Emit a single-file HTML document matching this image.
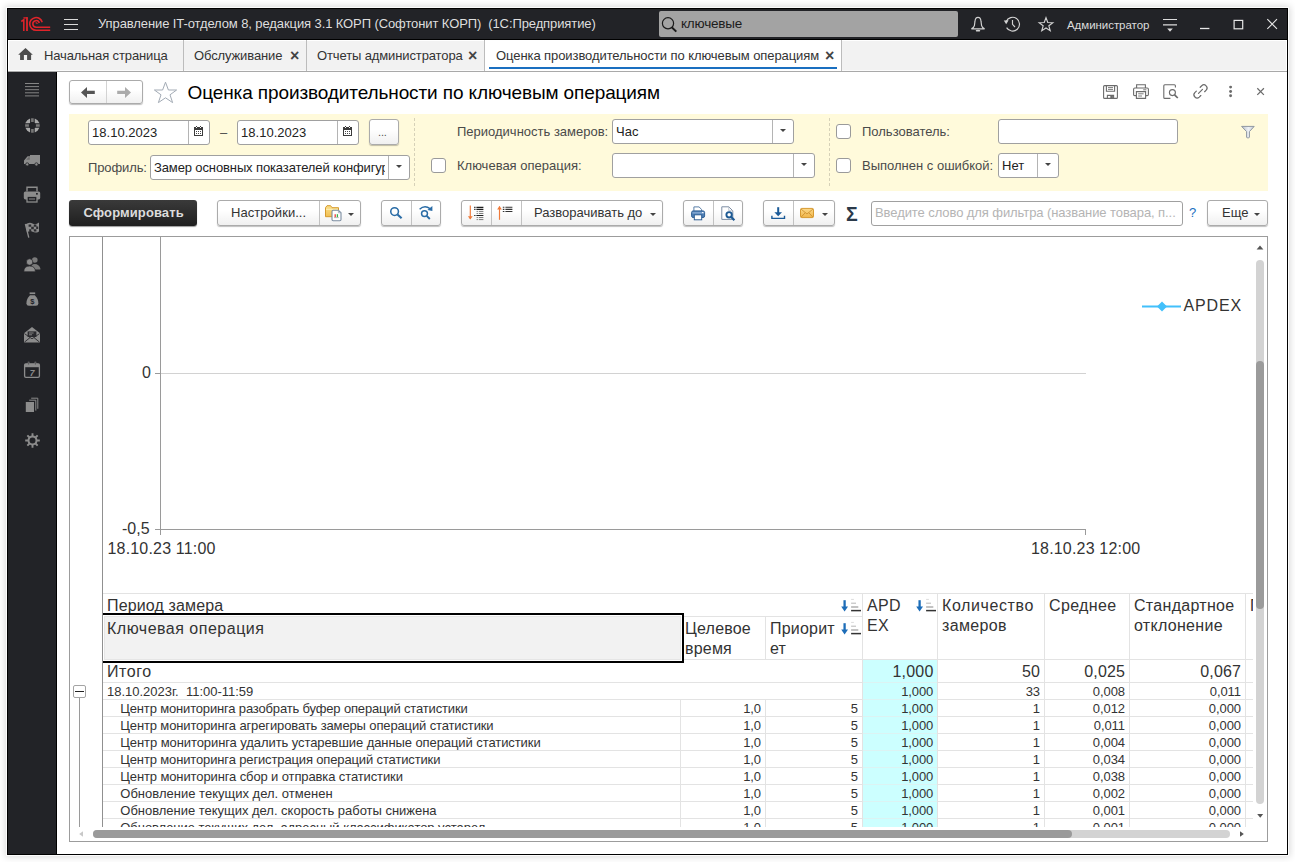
<!DOCTYPE html>
<html lang="ru"><head><meta charset="utf-8"><title>Оценка производительности по ключевым операциям</title>
<style>
*{box-sizing:border-box;margin:0;padding:0}
html,body{width:1295px;height:862px;overflow:hidden;background:#fff}
body{font-family:"Liberation Sans",sans-serif;font-size:13px;color:#333;position:relative}
.a{position:absolute}
.t{position:absolute;white-space:pre;line-height:16px;letter-spacing:-0.12px}
#win{left:7px;top:8px;width:1281px;height:847px;border:1px solid #000;background:#fff;box-shadow:0 0 0 1px #fbfbfb,0 0 7px 2px rgba(0,0,0,.15)}
#titlebar{left:8px;top:9px;width:1279px;height:30px;background:#222327}
#titleline{left:8px;top:39px;width:1279px;height:1px;background:#000}
#tabbar{left:8px;top:40px;width:1279px;height:32px;background:#f2f2f2;border-bottom:1px solid #a9a9a9;box-shadow:inset 1px 1px 0 #fff,inset -1px 0 0 #fff}
#side{left:8px;top:72px;width:49px;height:782px;background:#222327;border-right:1px solid #000}
.tabsep{top:40px;width:1px;height:31px;background:#bcbcbc}
.tx{font-weight:bold;font-size:13px;color:#444}
.btn{position:absolute;border:1px solid #ababab;border-radius:3px;background:linear-gradient(#ffffff 40%,#f0f0f0);box-shadow:0 1px 1px rgba(0,0,0,.25)}
.inp{position:absolute;border:1px solid #a0a0a0;border-radius:3px;background:#fff}
.cb{position:absolute;width:15px;height:15px;border:1px solid #9a9a9a;border-radius:3px;background:#fff}
.vsep{position:absolute;width:1px;background:#c6c6c6}
.lab{color:#4a4a4a;letter-spacing:0}
.arr{position:absolute;width:0;height:0;border-left:3px solid transparent;border-right:3px solid transparent;border-top:3px solid #444}
.cell{position:absolute;white-space:pre;overflow:hidden}
.hl{position:absolute;height:1px;background:#e3e3e3}
.vl{position:absolute;width:1px;background:#e3e3e3}
</style></head>
<body>
<div id="win" class="a"></div>
<div id="titlebar" class="a"></div>
<div id="titleline" class="a"></div>
<div id="tabbar" class="a"></div>
<div id="side" class="a"></div>
<div class="t" style="left:98px;top:16px;color:#dedede;letter-spacing:-0.1px">Управление IT-отделом 8, редакция 3.1 КОРП (Софтонит КОРП)  (1С:Предприятие)</div>
<div class="a" style="left:659px;top:11px;width:299px;height:26px;background:#a3a3a3;border-radius:2px"></div>
<div class="t" style="left:681px;top:16px;color:#1c1c1c;font-size:13.5px;letter-spacing:-0.2px">ключевые</div>
<div class="t" style="left:1067px;top:17px;color:#dcdcdc;font-size:11.5px;letter-spacing:-0.05px">Администратор</div>
<div class="a" style="left:8px;top:70px;width:1279px;height:1px;background:#fbfbfb"></div>
<div class="a" style="left:485px;top:40px;width:356px;height:31px;background:#fff"></div>
<div class="a tabsep" style="left:183px"></div>
<div class="a tabsep" style="left:306px"></div>
<div class="a tabsep" style="left:484px"></div>
<div class="a tabsep" style="left:841px"></div>
<div class="a" style="left:489px;top:67px;width:348px;height:2px;background:#1a6fc0"></div>
<div class="t" style="left:44px;top:48px">Начальная страница</div>
<div class="t" style="left:194px;top:48px">Обслуживание</div>
<div class="t" style="left:317px;top:48px">Отчеты администратора</div>
<div class="t" style="left:496px;top:48px;letter-spacing:-0.08px">Оценка производительности по ключевым операциям</div>
<div class="t tx" style="left:290px;top:48px;font-size:16px">×</div>
<div class="t tx" style="left:468px;top:48px;font-size:16px">×</div>
<div class="t tx" style="left:825px;top:48px;font-size:16px">×</div>
<div class="btn" style="left:69px;top:80px;width:74px;height:24px"></div>
<div class="a" style="left:106px;top:81px;width:1px;height:22px;background:#d3d3d3"></div>
<div class="t" style="left:187.5px;top:81px;font-size:19px;line-height:24px;color:#000;letter-spacing:-0.11px">Оценка производительности по ключевым операциям</div>
<div class="a" style="left:69px;top:114px;width:1199px;height:77px;background:#fffadb"></div>
<div class="inp" style="left:88px;top:120px;width:122px;height:25px"></div>
<div class="a" style="left:188px;top:121px;width:1px;height:23px;background:#b4b4b4"></div>
<div class="t" style="left:92px;top:125px;color:#222;letter-spacing:0.03px">18.10.2023</div>
<div class="inp" style="left:237px;top:120px;width:122px;height:25px"></div>
<div class="a" style="left:337px;top:121px;width:1px;height:23px;background:#b4b4b4"></div>
<div class="t" style="left:241px;top:125px;color:#222;letter-spacing:0.03px">18.10.2023</div>
<div class="t lab" style="left:220px;top:125px">–</div>
<div class="btn" style="left:369px;top:119px;width:30px;height:26px"></div>
<div class="t" style="left:378px;top:124px;color:#555;font-size:11px">...</div>
<div class="a" style="left:414px;top:118px;width:0;height:68px;border-left:1px dashed #d6d1b8"></div>
<div class="a" style="left:829px;top:118px;width:0;height:68px;border-left:1px dashed #d6d1b8"></div>
<div class="t lab" style="left:457px;top:124px">Периодичность замеров:</div>
<div class="inp" style="left:612px;top:119px;width:182px;height:25px"></div>
<div class="a" style="left:772px;top:120px;width:1px;height:23px;background:#b4b4b4"></div>
<div class="t" style="left:616px;top:124px;color:#222;letter-spacing:0.03px">Час</div>
<div class="arr" style="left:780px;top:129px"></div>
<div class="t lab" style="left:88px;top:160px;letter-spacing:-0.12px">Профиль:</div>
<div class="inp" style="left:150px;top:155px;width:260px;height:25px"></div>
<div class="a" style="left:388px;top:156px;width:1px;height:23px;background:#b4b4b4"></div>
<div class="arr" style="left:396px;top:165px"></div>
<div class="t" style="left:154px;top:160px;color:#222;width:231px;overflow:hidden">Замер основных показателей конфигурации</div>
<div class="cb" style="left:431px;top:158px"></div>
<div class="t lab" style="left:457px;top:158px">Ключевая операция:</div>
<div class="inp" style="left:612px;top:153px;width:203px;height:25px"></div>
<div class="a" style="left:793px;top:154px;width:1px;height:23px;background:#b4b4b4"></div>
<div class="arr" style="left:801px;top:163px"></div>
<div class="cb" style="left:836px;top:124px"></div>
<div class="t lab" style="left:862px;top:124px">Пользователь:</div>
<div class="inp" style="left:998px;top:119px;width:180px;height:25px"></div>
<div class="cb" style="left:836px;top:158px"></div>
<div class="t lab" style="left:862px;top:158px">Выполнен с ошибкой:</div>
<div class="inp" style="left:998px;top:153px;width:61px;height:25px"></div>
<div class="a" style="left:1037px;top:154px;width:1px;height:23px;background:#b4b4b4"></div>
<div class="t" style="left:1002px;top:158px;color:#222;letter-spacing:0.03px">Нет</div>
<div class="arr" style="left:1045px;top:163px"></div>
<div class="a" style="left:69px;top:200px;width:128px;height:26px;border-radius:3px;background:linear-gradient(#3a3a3a,#1f1f1f);box-shadow:0 1px 1px rgba(0,0,0,.4)"></div>
<div class="t" style="left:83.5px;top:205px;color:#dcdcdc;font-weight:bold;letter-spacing:0.1px;font-size:13px">Сформировать</div>
<div class="btn" style="left:217px;top:200px;width:144px;height:26px"></div>
<div class="a" style="left:319px;top:201px;width:1px;height:24px;background:#c2c2c2"></div>
<div class="arr" style="left:348px;top:213px"></div>
<div class="t" style="left:231px;top:205px;color:#333;font-size:13px;letter-spacing:0.05px">Настройки...</div>
<div class="btn" style="left:381px;top:200px;width:60px;height:26px"></div>
<div class="a" style="left:411px;top:201px;width:1px;height:24px;background:#c2c2c2"></div>
<div class="btn" style="left:461px;top:200px;width:202px;height:26px"></div>
<div class="a" style="left:491px;top:201px;width:1px;height:24px;background:#c2c2c2"></div>
<div class="a" style="left:521px;top:201px;width:1px;height:24px;background:#c2c2c2"></div>
<div class="arr" style="left:650px;top:213px"></div>
<div class="t" style="left:534px;top:205px;color:#333;font-size:13px;letter-spacing:0">Разворачивать до</div>
<div class="btn" style="left:683px;top:200px;width:60px;height:26px"></div>
<div class="a" style="left:713px;top:201px;width:1px;height:24px;background:#c2c2c2"></div>
<div class="btn" style="left:763px;top:200px;width:72px;height:26px"></div>
<div class="a" style="left:793px;top:201px;width:1px;height:24px;background:#c2c2c2"></div>
<div class="arr" style="left:822px;top:213px"></div>
<div class="t" style="left:846px;top:202px;color:#2b3a4a;font-size:19.5px;font-weight:bold;line-height:24px;letter-spacing:0">Σ</div>
<div class="inp" style="left:871px;top:201px;width:312px;height:25px"></div>
<div class="t" style="left:875px;top:205px;color:#b4b4b4;font-size:13px;letter-spacing:-0.08px">Введите слово для фильтра (название товара, п...</div>
<div class="t" style="left:1189px;top:205px;color:#1a6fc0;font-size:13px">?</div>
<div class="btn" style="left:1207px;top:200px;width:61px;height:26px"></div>
<div class="arr" style="left:1254px;top:213px"></div>
<div class="t" style="left:1222px;top:205px;color:#333;font-size:13px;letter-spacing:0">Еще</div>
<div class="a" style="left:69px;top:236px;width:1199px;height:606px;border:1px solid #9c9c9c;background:#fff"></div>
<div class="a" style="left:102px;top:237px;width:1px;height:590px;background:#909090"></div>
<div class="a" style="left:160px;top:237px;width:1px;height:298px;background:#9a9a9a"></div>
<div class="a" style="left:155px;top:373px;width:5px;height:1px;background:#9a9a9a"></div>
<div class="a" style="left:161px;top:373px;width:925px;height:1px;background:#d2d2d2"></div>
<div class="a" style="left:155px;top:529px;width:931px;height:1px;background:#9a9a9a"></div>
<div class="a" style="left:1085px;top:529px;width:1px;height:6px;background:#9a9a9a"></div>
<div class="t" style="left:142px;top:364px;font-size:16px;line-height:18px;color:#333;letter-spacing:0.18px">0</div>
<div class="t" style="left:122px;top:520px;font-size:16px;line-height:18px;color:#333;letter-spacing:0.18px;letter-spacing:0">-0,5</div>
<div class="t" style="left:107.5px;top:540px;font-size:16px;line-height:18px;color:#333;letter-spacing:0.18px">18.10.23 11:00</div>
<div class="t" style="left:1031px;top:540px;font-size:16px;line-height:18px;color:#333;letter-spacing:0.18px">18.10.23 12:00</div>
<div class="t" style="left:1183.5px;top:297px;font-size:16px;line-height:18px;color:#333;letter-spacing:0.18px;letter-spacing:0.85px">APDEX</div>
<svg class="a" style="left:1140px;top:298.5px" width="44" height="14"><path d="M2 7.5H41" stroke="#42c0fb" stroke-width="2"/><path d="M17 7.5l5-5 5 5-5 5z" fill="#42c0fb"/></svg>
<div class="a" style="left:863px;top:660px;width:74px;height:167px;background:#ccffff"></div>
<div class="hl" style="left:103px;top:593px;width:1150px"></div>
<div class="hl" style="left:103px;top:616px;width:759px"></div>
<div class="hl" style="left:103px;top:659px;width:1150px"></div>
<div class="hl" style="left:103px;top:682px;width:1150px"></div>
<div class="hl" style="left:103px;top:699px;width:1150px"></div>
<div class="hl" style="left:103px;top:716px;width:1150px"></div>
<div class="hl" style="left:103px;top:733px;width:1150px"></div>
<div class="hl" style="left:103px;top:750px;width:1150px"></div>
<div class="hl" style="left:103px;top:767px;width:1150px"></div>
<div class="hl" style="left:103px;top:784px;width:1150px"></div>
<div class="hl" style="left:103px;top:801px;width:1150px"></div>
<div class="hl" style="left:103px;top:818px;width:1150px"></div>
<div class="hl" style="left:863px;top:682px;width:74px;background:#dcf3f3"></div>
<div class="hl" style="left:863px;top:699px;width:74px;background:#dcf3f3"></div>
<div class="hl" style="left:863px;top:716px;width:74px;background:#dcf3f3"></div>
<div class="hl" style="left:863px;top:733px;width:74px;background:#dcf3f3"></div>
<div class="hl" style="left:863px;top:750px;width:74px;background:#dcf3f3"></div>
<div class="hl" style="left:863px;top:767px;width:74px;background:#dcf3f3"></div>
<div class="hl" style="left:863px;top:784px;width:74px;background:#dcf3f3"></div>
<div class="hl" style="left:863px;top:801px;width:74px;background:#dcf3f3"></div>
<div class="hl" style="left:863px;top:818px;width:74px;background:#dcf3f3"></div>
<div class="vl" style="left:862px;top:593px;height:234px"></div>
<div class="vl" style="left:937px;top:593px;height:234px"></div>
<div class="vl" style="left:1044px;top:593px;height:234px"></div>
<div class="vl" style="left:1129px;top:593px;height:234px"></div>
<div class="vl" style="left:1245px;top:593px;height:234px"></div>
<div class="vl" style="left:765px;top:616px;height:43px"></div>
<div class="vl" style="left:680px;top:699px;height:128px"></div>
<div class="vl" style="left:765px;top:699px;height:128px"></div>
<div class="t" style="left:107px;top:596px;font-size:16px;line-height:20px;color:#333;letter-spacing:0.14px">Период замера</div>
<div class="a" style="left:103px;top:613px;width:581px;height:50px;background:#f2f2f2;border:2px solid #000;border-left:0;box-shadow:inset 0 0 0 1px #fff,inset 0 0 0 2px #e6e6e6"></div>
<div class="t" style="left:107px;top:619px;font-size:16px;line-height:20px;color:#333;letter-spacing:0.5px">Ключевая операция</div>
<div class="t" style="left:685px;top:619px;font-size:16px;line-height:20px;color:#333;letter-spacing:0.2px">Целевое
время</div>
<div class="t" style="left:770px;top:619px;font-size:16px;line-height:20px;color:#333;letter-spacing:0.2px">Приорит
ет</div>
<div class="t" style="left:867px;top:596px;font-size:16px;line-height:20px;color:#333;letter-spacing:0.3px">APD
EX</div>
<div class="t" style="left:942px;top:596px;font-size:16px;line-height:20px;color:#333;letter-spacing:0.6px">Количество</div>
<div class="t" style="left:942px;top:616px;font-size:16px;line-height:20px;color:#333;letter-spacing:0.33px">замеров</div>
<div class="t" style="left:1049px;top:596px;font-size:16px;line-height:20px;color:#333;letter-spacing:0.36px">Среднее</div>
<div class="t" style="left:1134px;top:596px;font-size:16px;line-height:20px;color:#333;letter-spacing:0.3px">Стандартное
отклонение</div>
<div class="t" style="left:1250px;top:596px;font-size:16px;line-height:20px;color:#333;letter-spacing:0px;width:3px;overflow:hidden">П</div>
<div class="t" style="left:107px;top:662px;font-size:16px;line-height:20px;color:#333;letter-spacing:0.56px">Итого</div>
<div class="t" style="right:361.7px;top:662px;font-size:16px;line-height:20px;color:#333;letter-spacing:0.2px;margin-right:-0.2px;text-align:right">1,000</div>
<div class="t" style="right:255px;top:662px;font-size:16px;line-height:20px;color:#333;letter-spacing:0.2px;margin-right:-0.2px;text-align:right">50</div>
<div class="t" style="right:170px;top:662px;font-size:16px;line-height:20px;color:#333;letter-spacing:0.2px;margin-right:-0.2px;text-align:right">0,025</div>
<div class="t" style="right:54px;top:662px;font-size:16px;line-height:20px;color:#333;letter-spacing:0.2px;margin-right:-0.2px;text-align:right">0,067</div>
<div class="t" style="left:107px;top:684px;font-size:13px;line-height:16px;color:#333;letter-spacing:-0.01px">18.10.2023г.  11:00-11:59</div>
<div class="t" style="right:361.7px;top:684px;font-size:13px;line-height:16px;color:#333;letter-spacing:-0.01px;letter-spacing:-0.1px;margin-right:0.1px;text-align:right">1,000</div>
<div class="t" style="right:255px;top:684px;font-size:13px;line-height:16px;color:#333;letter-spacing:-0.01px;letter-spacing:-0.1px;margin-right:0.1px;text-align:right">33</div>
<div class="t" style="right:170px;top:684px;font-size:13px;line-height:16px;color:#333;letter-spacing:-0.01px;letter-spacing:-0.1px;margin-right:0.1px;text-align:right">0,008</div>
<div class="t" style="right:54px;top:684px;font-size:13px;line-height:16px;color:#333;letter-spacing:-0.01px;letter-spacing:-0.1px;margin-right:0.1px;text-align:right">0,011</div>
<div class="a" style="left:103px;top:700px;width:1150px;height:127px;overflow:hidden">
<div class="t" style="left:17.3px;top:1px;font-size:13px;line-height:16px;color:#333;letter-spacing:-0.12px;letter-spacing:-0.16px">Центр мониторинга разобрать буфер операций статистики</div><div class="t" style="right:492px;top:1px;font-size:13px;line-height:16px;color:#333;letter-spacing:-0.1px;margin-right:0.1px">1,0</div><div class="t" style="right:395px;top:1px;font-size:13px;line-height:16px;color:#333;letter-spacing:-0.1px;margin-right:0.1px">5</div><div class="t" style="right:319.7px;top:1px;font-size:13px;line-height:16px;color:#333;letter-spacing:-0.1px;margin-right:0.1px">1,000</div><div class="t" style="right:213px;top:1px;font-size:13px;line-height:16px;color:#333;letter-spacing:-0.1px;margin-right:0.1px">1</div><div class="t" style="right:128px;top:1px;font-size:13px;line-height:16px;color:#333;letter-spacing:-0.1px;margin-right:0.1px">0,012</div><div class="t" style="right:12px;top:1px;font-size:13px;line-height:16px;color:#333;letter-spacing:-0.1px;margin-right:0.1px">0,000</div>
<div class="t" style="left:17.3px;top:18px;font-size:13px;line-height:16px;color:#333;letter-spacing:-0.12px;letter-spacing:-0.13px">Центр мониторинга агрегировать замеры операций статистики</div><div class="t" style="right:492px;top:18px;font-size:13px;line-height:16px;color:#333;letter-spacing:-0.1px;margin-right:0.1px">1,0</div><div class="t" style="right:395px;top:18px;font-size:13px;line-height:16px;color:#333;letter-spacing:-0.1px;margin-right:0.1px">5</div><div class="t" style="right:319.7px;top:18px;font-size:13px;line-height:16px;color:#333;letter-spacing:-0.1px;margin-right:0.1px">1,000</div><div class="t" style="right:213px;top:18px;font-size:13px;line-height:16px;color:#333;letter-spacing:-0.1px;margin-right:0.1px">1</div><div class="t" style="right:128px;top:18px;font-size:13px;line-height:16px;color:#333;letter-spacing:-0.1px;margin-right:0.1px">0,011</div><div class="t" style="right:12px;top:18px;font-size:13px;line-height:16px;color:#333;letter-spacing:-0.1px;margin-right:0.1px">0,000</div>
<div class="t" style="left:17.3px;top:35px;font-size:13px;line-height:16px;color:#333;letter-spacing:-0.12px;letter-spacing:-0.08px">Центр мониторинга удалить устаревшие данные операций статистики</div><div class="t" style="right:492px;top:35px;font-size:13px;line-height:16px;color:#333;letter-spacing:-0.1px;margin-right:0.1px">1,0</div><div class="t" style="right:395px;top:35px;font-size:13px;line-height:16px;color:#333;letter-spacing:-0.1px;margin-right:0.1px">5</div><div class="t" style="right:319.7px;top:35px;font-size:13px;line-height:16px;color:#333;letter-spacing:-0.1px;margin-right:0.1px">1,000</div><div class="t" style="right:213px;top:35px;font-size:13px;line-height:16px;color:#333;letter-spacing:-0.1px;margin-right:0.1px">1</div><div class="t" style="right:128px;top:35px;font-size:13px;line-height:16px;color:#333;letter-spacing:-0.1px;margin-right:0.1px">0,004</div><div class="t" style="right:12px;top:35px;font-size:13px;line-height:16px;color:#333;letter-spacing:-0.1px;margin-right:0.1px">0,000</div>
<div class="t" style="left:17.3px;top:52px;font-size:13px;line-height:16px;color:#333;letter-spacing:-0.12px;letter-spacing:-0.14px">Центр мониторинга регистрация операций статистики</div><div class="t" style="right:492px;top:52px;font-size:13px;line-height:16px;color:#333;letter-spacing:-0.1px;margin-right:0.1px">1,0</div><div class="t" style="right:395px;top:52px;font-size:13px;line-height:16px;color:#333;letter-spacing:-0.1px;margin-right:0.1px">5</div><div class="t" style="right:319.7px;top:52px;font-size:13px;line-height:16px;color:#333;letter-spacing:-0.1px;margin-right:0.1px">1,000</div><div class="t" style="right:213px;top:52px;font-size:13px;line-height:16px;color:#333;letter-spacing:-0.1px;margin-right:0.1px">1</div><div class="t" style="right:128px;top:52px;font-size:13px;line-height:16px;color:#333;letter-spacing:-0.1px;margin-right:0.1px">0,034</div><div class="t" style="right:12px;top:52px;font-size:13px;line-height:16px;color:#333;letter-spacing:-0.1px;margin-right:0.1px">0,000</div>
<div class="t" style="left:17.3px;top:69px;font-size:13px;line-height:16px;color:#333;letter-spacing:-0.12px;letter-spacing:-0.115px">Центр мониторинга сбор и отправка статистики</div><div class="t" style="right:492px;top:69px;font-size:13px;line-height:16px;color:#333;letter-spacing:-0.1px;margin-right:0.1px">1,0</div><div class="t" style="right:395px;top:69px;font-size:13px;line-height:16px;color:#333;letter-spacing:-0.1px;margin-right:0.1px">5</div><div class="t" style="right:319.7px;top:69px;font-size:13px;line-height:16px;color:#333;letter-spacing:-0.1px;margin-right:0.1px">1,000</div><div class="t" style="right:213px;top:69px;font-size:13px;line-height:16px;color:#333;letter-spacing:-0.1px;margin-right:0.1px">1</div><div class="t" style="right:128px;top:69px;font-size:13px;line-height:16px;color:#333;letter-spacing:-0.1px;margin-right:0.1px">0,038</div><div class="t" style="right:12px;top:69px;font-size:13px;line-height:16px;color:#333;letter-spacing:-0.1px;margin-right:0.1px">0,000</div>
<div class="t" style="left:17.3px;top:86px;font-size:13px;line-height:16px;color:#333;letter-spacing:-0.12px;letter-spacing:0.01px">Обновление текущих дел. отменен</div><div class="t" style="right:492px;top:86px;font-size:13px;line-height:16px;color:#333;letter-spacing:-0.1px;margin-right:0.1px">1,0</div><div class="t" style="right:395px;top:86px;font-size:13px;line-height:16px;color:#333;letter-spacing:-0.1px;margin-right:0.1px">5</div><div class="t" style="right:319.7px;top:86px;font-size:13px;line-height:16px;color:#333;letter-spacing:-0.1px;margin-right:0.1px">1,000</div><div class="t" style="right:213px;top:86px;font-size:13px;line-height:16px;color:#333;letter-spacing:-0.1px;margin-right:0.1px">1</div><div class="t" style="right:128px;top:86px;font-size:13px;line-height:16px;color:#333;letter-spacing:-0.1px;margin-right:0.1px">0,002</div><div class="t" style="right:12px;top:86px;font-size:13px;line-height:16px;color:#333;letter-spacing:-0.1px;margin-right:0.1px">0,000</div>
<div class="t" style="left:17.3px;top:103px;font-size:13px;line-height:16px;color:#333;letter-spacing:-0.12px;letter-spacing:-0.02px">Обновление текущих дел. скорость работы снижена</div><div class="t" style="right:492px;top:103px;font-size:13px;line-height:16px;color:#333;letter-spacing:-0.1px;margin-right:0.1px">1,0</div><div class="t" style="right:395px;top:103px;font-size:13px;line-height:16px;color:#333;letter-spacing:-0.1px;margin-right:0.1px">5</div><div class="t" style="right:319.7px;top:103px;font-size:13px;line-height:16px;color:#333;letter-spacing:-0.1px;margin-right:0.1px">1,000</div><div class="t" style="right:213px;top:103px;font-size:13px;line-height:16px;color:#333;letter-spacing:-0.1px;margin-right:0.1px">1</div><div class="t" style="right:128px;top:103px;font-size:13px;line-height:16px;color:#333;letter-spacing:-0.1px;margin-right:0.1px">0,001</div><div class="t" style="right:12px;top:103px;font-size:13px;line-height:16px;color:#333;letter-spacing:-0.1px;margin-right:0.1px">0,000</div>
<div class="t" style="left:17.3px;top:120px;font-size:13px;line-height:16px;color:#333;letter-spacing:-0.12px;letter-spacing:-0.05px">Обновление текущих дел. адресный классификатор устарел</div><div class="t" style="right:492px;top:120px;font-size:13px;line-height:16px;color:#333;letter-spacing:-0.1px;margin-right:0.1px">1,0</div><div class="t" style="right:395px;top:120px;font-size:13px;line-height:16px;color:#333;letter-spacing:-0.1px;margin-right:0.1px">5</div><div class="t" style="right:319.7px;top:120px;font-size:13px;line-height:16px;color:#333;letter-spacing:-0.1px;margin-right:0.1px">1,000</div><div class="t" style="right:213px;top:120px;font-size:13px;line-height:16px;color:#333;letter-spacing:-0.1px;margin-right:0.1px">1</div><div class="t" style="right:128px;top:120px;font-size:13px;line-height:16px;color:#333;letter-spacing:-0.1px;margin-right:0.1px">0,001</div><div class="t" style="right:12px;top:120px;font-size:13px;line-height:16px;color:#333;letter-spacing:-0.1px;margin-right:0.1px">0,000</div>
</div>
<div class="a" style="left:73px;top:685px;width:13px;height:13px;border:1px solid #a4a4a4;border-radius:2px;background:#fff"></div>
<div class="a" style="left:75px;top:691px;width:9px;height:1px;background:#222"></div>
<div class="a" style="left:79px;top:698px;width:1px;height:129px;background:#9a9a9a"></div>
<div class="a" style="left:93px;top:830px;width:1137px;height:8px;border-radius:4px;background:#d3d3d3"></div>
<div class="a" style="left:93px;top:830px;width:979px;height:8px;border-radius:4px;background:#9a9a9a"></div>
<div class="a" style="left:1256px;top:260px;width:8px;height:544px;border-radius:4px;background:#d3d3d3"></div>
<div class="a" style="left:1256px;top:361px;width:8px;height:248px;border-radius:4px;background:#9b9b9b"></div>
<svg class="a" style="left:1255px;top:243px" width="10" height="8"><path d="M1.6 6.4L5 2.4L8.4 6.4z" fill="#555"/></svg>
<svg class="a" style="left:1255px;top:812px" width="10" height="8"><path d="M2.2 2L5.2 5.8L8.2 2z" fill="#555"/></svg>
<svg class="a" style="left:77px;top:829px" width="8" height="10"><path d="M6 2.2L2.2 5L6 7.8z" fill="#c8c8c8"/></svg>
<svg class="a" style="left:1238px;top:829px" width="8" height="10"><path d="M2 2.2L5.8 5L2 7.8z" fill="#555"/></svg>
<svg class="a" style="left:20px;top:16px" width="32" height="16" viewBox="0 0 32 16" ><g fill="none" stroke="#e0242a" stroke-width="1.55"><path d="M1.3 5.5L3.8 3.7V14.9"/><path d="M7 1.2V14.9" stroke-width="1.8"/><path d="M3.4 1.9H7.6" stroke-width="1.3"/><path d="M22.2 6.2A6.35 6.35 0 1 0 16.1 14.25H30.2"/><path d="M19.3 7A3.3 3.3 0 1 0 16.1 11.2H30.2"/><path d="M17.2 7.9A1.1 1.1 0 0 0 15.6 6.9" stroke-width="1.1"/></g></svg>
<svg class="a" style="left:63px;top:17px" width="16" height="14" viewBox="0 0 16 14" ><path d="M1 2.5H15M1 7.5H15M1 12.5H15" stroke="#dadada" stroke-width="1.1"/></svg>
<svg class="a" style="left:660px;top:15px" width="20" height="18" viewBox="0 0 20 18" ><circle cx="8" cy="8.3" r="5.6" fill="none" stroke="#1a1a1a" stroke-width="1.2"/><path d="M12 12.5L16.3 16.6" stroke="#1a1a1a" stroke-width="2"/></svg>
<svg class="a" style="left:969px;top:15px" width="18" height="18" viewBox="0 0 18 18" ><g fill="none" stroke="#d2d2d2" stroke-width="1.15"><path d="M9 2.4C7.2 2.4 6.2 4 6 6.2L5.4 10.6Q5 12.6 2.4 13.8H15.6Q13 12.6 12.6 10.6L12 6.2C11.8 4 10.8 2.4 9 2.4Z"/></g><ellipse cx="9" cy="15.7" rx="2.3" ry="0.9" fill="#d2d2d2"/></svg>
<svg class="a" style="left:1003px;top:15px" width="18" height="18" viewBox="0 0 18 18" ><g fill="none" stroke="#d2d2d2" stroke-width="1.15"><path d="M3.2 6.6A6.9 6.9 0 1 1 3.6 12.6"/><path d="M9.5 5V9.3L12 12"/></g><path d="M0.8 5.4L5.6 5.2L3.2 9.2Z" fill="#d2d2d2"/></svg>
<svg class="a" style="left:1037px;top:15px" width="18" height="18" viewBox="0 0 18 18" ><path d="M9.00 2.70L10.76 7.47L15.85 7.68L11.85 10.83L13.23 15.72L9.00 12.90L4.77 15.72L6.15 10.83L2.15 7.68L7.24 7.47Z" fill="none" stroke="#d2d2d2" stroke-width="1.15" stroke-linejoin="miter"/></svg>
<svg class="a" style="left:1162px;top:17px" width="16" height="16" viewBox="0 0 16 16" ><path d="M1 2.5H15M1 7.9H15" stroke="#dcdcdc" stroke-width="1.2"/><path d="M5.2 11.6H10.8L8 14.8Z" fill="#dcdcdc"/></svg>
<svg class="a" style="left:1199px;top:26px" width="12" height="4" viewBox="0 0 12 4" ><path d="M1 2.5H10.4" stroke="#e6e6e6" stroke-width="1.3"/></svg>
<svg class="a" style="left:1232px;top:18px" width="13" height="13" viewBox="0 0 13 13" ><rect x="2.1" y="2.4" width="8.6" height="8.4" fill="none" stroke="#e6e6e6" stroke-width="1.2"/></svg>
<svg class="a" style="left:1265px;top:17px" width="14" height="14" viewBox="0 0 14 14" ><path d="M2.3 2.2L12 11.9M12 2.2L2.3 11.9" stroke="#e6e6e6" stroke-width="1.1"/></svg>
<svg class="a" style="left:17px;top:46px" width="16" height="16" viewBox="0 0 16 16" ><path d="M8.5 2L1.2 8.8H3.1V13.9H6.9V9H10.1V13.9H14.1V8.8H15.8Z" fill="#4d4d4d"/></svg>
<svg class="a" style="left:78px;top:83.5px" width="20" height="16" viewBox="0 0 20 16" ><path d="M3 8.4L9 2.9V6.8H16.8V10H9V13.9Z" fill="#555"/></svg>
<svg class="a" style="left:114px;top:83.5px" width="20" height="16" viewBox="0 0 20 16" ><path d="M17 8.4L11 2.9V6.8H3.2V10H11V13.9Z" fill="#ababab"/></svg>
<svg class="a" style="left:152px;top:80px" width="27" height="25" viewBox="0 0 27 25" ><path d="M13.5 2.2L16.4 10H24.6L18 14.8L20.6 22.6L13.5 17.8L6.4 22.6L9 14.8L2.4 10H10.6Z" fill="#fff" stroke="#a3abb5" stroke-width="1"/></svg>
<svg class="a" style="left:1102px;top:84px" width="17" height="16" viewBox="0 0 17 16" ><g fill="none" stroke="#6b6b6b" stroke-width="1.1"><path d="M1.6 2.6Q1.6 1.6 2.6 1.6H14.4Q15.4 1.6 15.4 2.6V13.4Q15.4 14.4 14.4 14.4H2.6Q1.6 14.4 1.6 13.4Z"/><path d="M4.4 1.6V7.2H12.6V1.6"/><path d="M6 3.6H11M6 5.4H11" stroke-width=".9"/><path d="M5.4 14.4V11.4H11.6V14.4"/></g><rect x="8.3" y="11.6" width="2.6" height="2.6" fill="#6b6b6b"/></svg>
<svg class="a" style="left:1132px;top:83px" width="19" height="17" viewBox="0 0 19 17" ><g fill="none" stroke="#6b6b6b" stroke-width="1.1"><path d="M4.6 5V1.8H13.4V5"/><path d="M4.2 12.6H2.8Q1.6 12.6 1.6 11.4V6.2Q1.6 5 2.8 5H15.2Q16.4 5 16.4 6.2V11.4Q16.4 12.6 15.2 12.6H13.8"/><path d="M4.4 8.6H13.6V15.4H4.4Z"/><path d="M6.2 10.8H11.6M6.2 13H10" stroke-width=".9"/><path d="M11.2 6.8H14.4" stroke-width=".9"/></g></svg>
<svg class="a" style="left:1162px;top:83px" width="18" height="17" viewBox="0 0 18 17" ><g fill="none" stroke="#6b6b6b" stroke-width="1.1"><path d="M13.4 4.4V2.8Q13.4 1.8 12.4 1.8H2.8Q1.8 1.8 1.8 2.8V14.4Q1.8 15.4 2.8 15.4H8.4"/><circle cx="10.4" cy="9.6" r="3"/><path d="M12.6 11.8L15.8 15" stroke-width="1.7"/></g></svg>
<svg class="a" style="left:1191px;top:82px" width="19" height="19" viewBox="0 0 19 19" ><g fill="none" stroke="#6b6b6b" stroke-width="1.2" stroke-linecap="round"><path d="M9.18 5.26L10.74 3.71A3.15 3.15 0 0 1 15.19 8.16L13.64 9.72"/><path d="M9.82 13.54L8.26 15.09A3.15 3.15 0 0 1 3.81 10.64L5.36 9.08"/><path d="M7.52 11.38L11.48 7.42"/></g></svg>
<svg class="a" style="left:1227px;top:84px" width="7" height="15" viewBox="0 0 7 15" ><circle cx="3.6" cy="3.1" r="1.45" fill="#6b6b6b"/><circle cx="3.6" cy="7.5" r="1.45" fill="#6b6b6b"/><circle cx="3.6" cy="11.8" r="1.45" fill="#6b6b6b"/></svg>
<svg class="a" style="left:1255px;top:86px" width="11" height="11" viewBox="0 0 11 11" ><path d="M2.3 2.3L8.9 8.9M8.9 2.3L2.3 8.9" stroke="#6b6b6b" stroke-width="1.25"/></svg>
<svg class="a" style="left:194px;top:126px" width="9" height="10" viewBox="0 0 9 10" ><g shape-rendering="crispEdges"><rect x="1" y="4" width="7" height="5" fill="#fff"/><rect x="0" y="1" width="9" height="3" fill="#3c3c3c"/><rect x="2" y="0" width="1" height="1" fill="#3c3c3c"/><rect x="6" y="0" width="1" height="1" fill="#3c3c3c"/><rect x="2" y="1" width="1" height="1" fill="#fff"/><rect x="6" y="1" width="1" height="1" fill="#fff"/><rect x="0" y="4" width="1" height="6" fill="#3c3c3c"/><rect x="8" y="4" width="1" height="6" fill="#3c3c3c"/><rect x="0" y="9" width="9" height="1" fill="#3c3c3c"/><rect x="2" y="5" width="1" height="1" fill="#4a4a4a"/><rect x="4" y="5" width="1" height="1" fill="#4a4a4a"/><rect x="6" y="5" width="1" height="1" fill="#4a4a4a"/><rect x="2" y="7" width="1" height="1" fill="#4a4a4a"/><rect x="4" y="7" width="1" height="1" fill="#4a4a4a"/><rect x="6" y="7" width="1" height="1" fill="#4a4a4a"/></g></svg>
<svg class="a" style="left:343px;top:126px" width="9" height="10" viewBox="0 0 9 10" ><g shape-rendering="crispEdges"><rect x="1" y="4" width="7" height="5" fill="#fff"/><rect x="0" y="1" width="9" height="3" fill="#3c3c3c"/><rect x="2" y="0" width="1" height="1" fill="#3c3c3c"/><rect x="6" y="0" width="1" height="1" fill="#3c3c3c"/><rect x="2" y="1" width="1" height="1" fill="#fff"/><rect x="6" y="1" width="1" height="1" fill="#fff"/><rect x="0" y="4" width="1" height="6" fill="#3c3c3c"/><rect x="8" y="4" width="1" height="6" fill="#3c3c3c"/><rect x="0" y="9" width="9" height="1" fill="#3c3c3c"/><rect x="2" y="5" width="1" height="1" fill="#4a4a4a"/><rect x="4" y="5" width="1" height="1" fill="#4a4a4a"/><rect x="6" y="5" width="1" height="1" fill="#4a4a4a"/><rect x="2" y="7" width="1" height="1" fill="#4a4a4a"/><rect x="4" y="7" width="1" height="1" fill="#4a4a4a"/><rect x="6" y="7" width="1" height="1" fill="#4a4a4a"/></g></svg>
<svg class="a" style="left:1240px;top:124px" width="16" height="16" viewBox="0 0 16 16" ><defs><linearGradient id="fg" x1="0" y1="0" x2="1" y2="0"><stop offset="0" stop-color="#b9c0ca"/><stop offset=".55" stop-color="#eef1f5"/><stop offset="1" stop-color="#c3c9d2"/></linearGradient></defs><path d="M1.6 2.4H14.2L9.4 7.6V13Q9.4 13.8 8.6 13.8H7.4Q6.6 13.8 6.6 13V7.6Z" fill="url(#fg)" stroke="#8e96a1" stroke-width="1" stroke-linejoin="round"/></svg>
<svg class="a" style="left:324px;top:204px" width="19" height="18" viewBox="0 0 19 18" ><defs><linearGradient id="fo" x1="0" y1="0" x2="0" y2="1"><stop offset="0" stop-color="#fbe08a"/><stop offset="1" stop-color="#f1bf52"/></linearGradient></defs><path d="M1.5 12.7V3.7L3 1.7H6.6L8 3.7H14.5V12.7Z" fill="url(#fo)" stroke="#d59a2e" stroke-width="1"/><path d="M2 5.3H14" stroke="#fdf0bd" stroke-width="1"/><path d="M9.2 6.3H14.4L17 8.8V15.6Q17 16.8 15.8 16.8H9.2Q8 16.8 8 15.6V7.5Q8 6.3 9.2 6.3Z" fill="#fff" stroke="#7b8ca0" stroke-width="1.1"/><path d="M14.4 6.3V8.8H17" fill="none" stroke="#9aa8b8" stroke-width=".8"/><path d="M11.2 10.2V13.2" stroke="#ee3b3b" stroke-width="1.3"/><path d="M13.4 10.2V13.2" stroke="#35b44a" stroke-width="1.3"/><path d="M10 13.6H14.8" stroke="#a0a0a0" stroke-width=".7"/></svg>
<svg class="a" style="left:387px;top:204px" width="18" height="18" viewBox="0 0 18 18" ><circle cx="7.6" cy="7.6" r="3.85" fill="none" stroke="#2a6ca6" stroke-width="1.55"/><path d="M10.5 10.5L14.6 14.3" stroke="#2a6ca6" stroke-width="2.1"/></svg>
<svg class="a" style="left:416px;top:203px" width="19" height="19" viewBox="0 0 19 19" ><circle cx="8.5" cy="10.6" r="2.95" fill="none" stroke="#2a6ca6" stroke-width="1.5"/><path d="M10.7 12.9L13.8 16" stroke="#2a6ca6" stroke-width="1.9"/><path d="M3.6 6.2Q8.6 1.8 14 5.6" fill="none" stroke="#2a6ca6" stroke-width="1.5"/><path d="M16.4 3L16.4 8L11.4 7Z" fill="#2a6ca6"/></svg>
<svg class="a" style="left:465px;top:204px" width="21" height="18" viewBox="0 0 21 18" ><path d="M5.3 1.6V15" stroke="#f07a3a" stroke-width="1.15"/><path d="M2.9 12.2L5.3 15.6L7.7 12.2Z" fill="#f07a3a"/><path d="M9.2 3.30h1.3M11.4 3.30H18.4M9.2 5.35h1.3M11.4 5.35H18.4M9.2 11.50h1.3M11.4 11.50H18.4" stroke="#1e1e1e" stroke-width="1.2"/><path d="M11.6 7.40h1.3M13.8 7.40H18.4M11.6 9.45h1.3M13.8 9.45H18.4M11.6 13.55h1.3M13.8 13.55H18.4M11.6 15.60h1.3M13.8 15.60H18.4" stroke="#7a7a7a" stroke-width="1"/></svg>
<svg class="a" style="left:494px;top:204px" width="21" height="18" viewBox="0 0 21 18" ><path d="M5.5 2.4V15.8" stroke="#f07a3a" stroke-width="1.15"/><path d="M3.1 5.4L5.5 2L7.9 5.4Z" fill="#f07a3a"/><path d="M8.8 3.30h1.6M11.4 3.30H18.4M8.8 5.40h1.6M11.4 5.40H18.4M8.8 7.50h1.6M11.4 7.50H18.4" stroke="#333" stroke-width="1.1"/></svg>
<svg class="a" style="left:690px;top:204px" width="17" height="18" viewBox="0 0 17 18" ><path d="M3.9 7V2.9H9L11.6 5.4V7" fill="#fff" stroke="#5b7fa8" stroke-width="1"/><rect x="1.6" y="6.9" width="13" height="6.6" rx="1.6" fill="#4f80b6" stroke="#2f5f95" stroke-width="1"/><path d="M2.4 8.9H14" stroke="#9dbbe0" stroke-width="1"/><rect x="4.3" y="10.8" width="7.4" height="5" fill="#fff" stroke="#2f5f95" stroke-width="1"/><path d="M12 8.6h1.4" stroke="#fff" stroke-width="1"/></svg>
<svg class="a" style="left:720px;top:205px" width="17" height="18" viewBox="0 0 17 18" ><path d="M1.8 1.8H8.8L12.8 5.8V14.4H1.8Z" fill="#fff" stroke="#7d8da3" stroke-width="1"/><path d="M8.8 1.8V5.8H12.8" fill="none" stroke="#aab4c2" stroke-width=".8"/><circle cx="9.1" cy="9.8" r="2.7" fill="#fff" stroke="#1d5a94" stroke-width="1.9"/><path d="M11.2 12L14.4 15.2" stroke="#1d5a94" stroke-width="2.2"/></svg>
<svg class="a" style="left:770px;top:205px" width="17" height="16" viewBox="0 0 17 16" ><path d="M8.2 2.2V8.6" stroke="#1a5a98" stroke-width="2"/><path d="M4.4 7.2L8.2 11.2L12 7.2Z" fill="#1a5a98"/><path d="M1.9 10.8V13.4H14.5V10.8" fill="none" stroke="#1a5a98" stroke-width="1.4"/></svg>
<svg class="a" style="left:799px;top:206px" width="16" height="13" viewBox="0 0 16 13" ><defs><linearGradient id="mg" x1="0" y1="0" x2="0" y2="1"><stop offset="0" stop-color="#fbd98a"/><stop offset="1" stop-color="#f1b548"/></linearGradient></defs><rect x="1.5" y="2.4" width="13" height="9.2" rx="1.2" fill="url(#mg)" stroke="#d79a30" stroke-width="1"/><path d="M2 3L8 8L14 3M2.2 11L6.2 6.8M13.8 11L9.8 6.8" fill="none" stroke="#c98a28" stroke-width=".8"/></svg>
<svg class="a" style="left:24px;top:82px" width="16" height="16" viewBox="0 0 16 16" ><path d="M1 1.5H15M1 4.6H15M1 7.7H15M1 10.8H15M1 13.9H15" stroke="#858585" stroke-width="1"/></svg>
<svg class="a" style="left:24px;top:117px" width="17" height="17" viewBox="0 0 17 17" ><circle cx="8.4" cy="8.5" r="5.3" fill="none" stroke="#a9a9a9" stroke-width="4"/><path d="M8.4 1V16M0.9 8.5H15.9" stroke="#222327" stroke-width="4.6"/><path d="M8.4 1.2V5M8.4 12V15.8M1.1 8.5H4.9M11.9 8.5H15.7" stroke="#777" stroke-width="2.6"/></svg>
<svg class="a" style="left:23px;top:154px" width="18" height="13" viewBox="0 0 18 13" ><path d="M1 10V6.6L4.6 2.2H7V1H17V10Z" fill="#8c8c8c"/><circle cx="4.2" cy="10.4" r="1.6" fill="#8c8c8c" stroke="#222327" stroke-width=".8"/><circle cx="13.4" cy="10.4" r="1.6" fill="#8c8c8c" stroke="#222327" stroke-width=".8"/><path d="M3.2 5.8L5.4 3.2H6.8V5.8Z" fill="#6a6a6a"/></svg>
<svg class="a" style="left:23px;top:186px" width="18" height="17" viewBox="0 0 18 17" ><path d="M4 5.4V1.2H14V5.4" fill="none" stroke="#8c8c8c" stroke-width="1.4"/><rect x="0.8" y="5.4" width="16.4" height="8" rx="1.6" fill="#8c8c8c"/><rect x="4" y="10.2" width="10" height="5.8" fill="#222327" stroke="#8c8c8c" stroke-width="1.3"/><path d="M6 13H12" stroke="#8c8c8c" stroke-width="1"/><rect x="13" y="7" width="1.8" height="1.6" fill="#222327"/></svg>
<svg class="a" style="left:24px;top:221px" width="17" height="18" viewBox="0 0 17 18" ><path d="M1.6 3.2Q5.4 0.6 8.4 2.4T15 1.6V10.4Q11.6 12.6 8.6 10.8T3 11.6Z" fill="#8c8c8c"/><path d="M1.4 3L4.8 16.6" stroke="#8c8c8c" stroke-width="1.3"/><path d="M4.6 3.4h2.6v2.4h-2.6zM9.8 3.4h2.6v2.4h-2.6zM7.2 5.8h2.6v2.4h-2.6zM12.2 5.6h2v2.4h-2zM5.2 8.2h2v2h-2zM9.8 8.2h2.6v2.2h-2.6z" fill="#2c2c30"/></svg>
<svg class="a" style="left:23px;top:256px" width="18" height="17" viewBox="0 0 18 17" ><circle cx="11.8" cy="4" r="2.8" fill="#7a7a7a"/><path d="M7.6 13.6Q7.6 8 11.8 8T17.4 12.6V13.6Z" fill="#7a7a7a"/><circle cx="6.6" cy="6" r="3.2" fill="#8c8c8c" stroke="#222327" stroke-width=".7"/><path d="M0.8 15.8Q0.8 10 6.6 10T12.4 15.8Z" fill="#8c8c8c" stroke="#222327" stroke-width=".7"/></svg>
<svg class="a" style="left:25px;top:291px" width="15" height="16" viewBox="0 0 15 16" ><rect x="4.6" y="1.4" width="5.6" height="1.7" fill="#8c8c8c"/><path d="M5 4.2H9.8Q13.6 8 13.4 12.4Q13.2 14.8 11 14.8H3.8Q1.6 14.8 1.4 12.4Q1.2 8 5 4.2Z" fill="#8c8c8c"/><text x="7.4" y="13" font-family="Liberation Sans,sans-serif" font-size="7.5" font-weight="bold" text-anchor="middle" fill="#222327">$</text></svg>
<svg class="a" style="left:23px;top:326px" width="18" height="18" viewBox="0 0 18 18" ><path d="M1 7.2L9 1L17 7.2V16.6H1Z" fill="#8c8c8c"/><rect x="4.6" y="5.4" width="8.8" height="5.6" fill="#2a2a2e"/><path d="M6 7H10.6M6 8.8H9" stroke="#8c8c8c" stroke-width=".9"/><path d="M1.4 7.6L9 12.8L16.6 7.6M1.4 16.2L7 11.6M16.6 16.2L11 11.6" fill="none" stroke="#2a2a2e" stroke-width=".9"/></svg>
<svg class="a" style="left:23px;top:361px" width="18" height="18" viewBox="0 0 18 18" ><rect x="1.6" y="2.8" width="14.8" height="13.6" rx="1.4" fill="none" stroke="#8c8c8c" stroke-width="1.3"/><rect x="1.6" y="2.8" width="14.8" height="3.4" fill="#8c8c8c"/><path d="M5.6 0.8V4M12.4 0.8V4" stroke="#8c8c8c" stroke-width="1.6"/><path d="M5.6 1V3.6M12.4 1V3.6" stroke="#222327" stroke-width=".5"/><text x="9.1" y="14.6" font-family="Liberation Sans,sans-serif" font-size="8.6" font-weight="bold" font-style="italic" text-anchor="middle" fill="#8c8c8c">7</text></svg>
<svg class="a" style="left:24px;top:396px" width="16" height="18" viewBox="0 0 16 18" ><path d="M7.2 2.2H13.8V12.8M5.2 4.2H11.8V14.6" fill="none" stroke="#8c8c8c" stroke-width="1"/><rect x="1.8" y="6" width="8.2" height="10" fill="#8c8c8c"/></svg>
<svg class="a" style="left:23.5px;top:431.7px" width="17" height="17" viewBox="0 0 17 17" ><circle cx="8.5" cy="8.5" r="4" fill="none" stroke="#8c8c8c" stroke-width="2"/><path d="M12.70 8.50L15.80 8.50M11.47 11.47L13.66 13.66M8.50 12.70L8.50 15.80M5.53 11.47L3.34 13.66M4.30 8.50L1.20 8.50M5.53 5.53L3.34 3.34M8.50 4.30L8.50 1.20M11.47 5.53L13.66 3.34" stroke="#8c8c8c" stroke-width="1.9"/></svg>
<svg class="a" style="left:841px;top:598px" width="21" height="15" viewBox="0 0 21 15" ><path d="M3.6 2.2V9.6" stroke="#1d6db8" stroke-width="2.3"/><path d="M0.2 8.4L3.6 13.4L7 8.4Z" fill="#1d6db8"/><path d="M10.1 1.4H12.9" stroke="#dcdcdc" stroke-width="1"/><path d="M10.1 5.2H15" stroke="#bdbdbd" stroke-width="1.1"/><path d="M10.1 9H17.3" stroke="#9a9a9a" stroke-width="1.2"/><path d="M10.1 12.6H20" stroke="#333" stroke-width="1.5"/></svg>
<svg class="a" style="left:841px;top:621px" width="21" height="15" viewBox="0 0 21 15" ><path d="M3.6 2.2V9.6" stroke="#1d6db8" stroke-width="2.3"/><path d="M0.2 8.4L3.6 13.4L7 8.4Z" fill="#1d6db8"/><path d="M10.1 1.4H12.9" stroke="#dcdcdc" stroke-width="1"/><path d="M10.1 5.2H15" stroke="#bdbdbd" stroke-width="1.1"/><path d="M10.1 9H17.3" stroke="#9a9a9a" stroke-width="1.2"/><path d="M10.1 12.6H20" stroke="#333" stroke-width="1.5"/></svg>
<svg class="a" style="left:916px;top:598px" width="21" height="15" viewBox="0 0 21 15" ><path d="M3.6 2.2V9.6" stroke="#1d6db8" stroke-width="2.3"/><path d="M0.2 8.4L3.6 13.4L7 8.4Z" fill="#1d6db8"/><path d="M10.1 1.4H12.9" stroke="#dcdcdc" stroke-width="1"/><path d="M10.1 5.2H15" stroke="#bdbdbd" stroke-width="1.1"/><path d="M10.1 9H17.3" stroke="#9a9a9a" stroke-width="1.2"/><path d="M10.1 12.6H20" stroke="#333" stroke-width="1.5"/></svg>
</body></html>
